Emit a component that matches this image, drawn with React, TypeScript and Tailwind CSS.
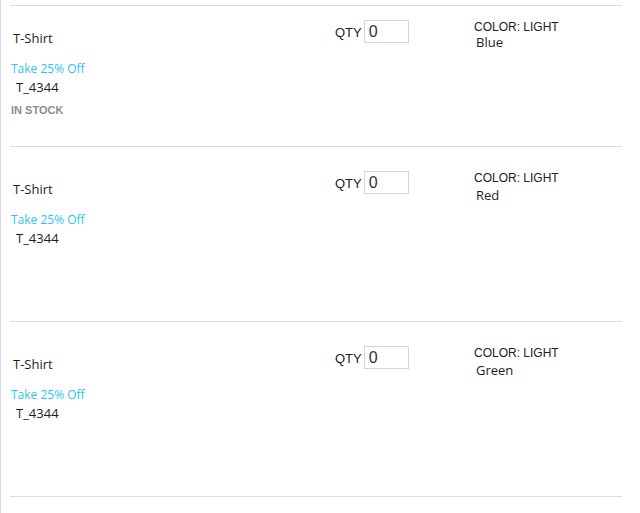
import { useState } from "react";

interface RowProps {
  name: string;
  color: string;
  sku: string;
  inStock?: boolean;
  first?: boolean;
}

function ProductRow({ name, color, sku, inStock, first }: RowProps) {
  const [qty, setQty] = useState("0");

  return (
    <div
      className={`border-t border-[#dcdcdc] flex items-start ${
        first ? "h-[141px]" : "h-[175px] pt-[10px]"
      }`}
    >
      {/* 상품 정보 */}
      <div className="w-[325px] flex flex-col pt-[24px] font-['Open_Sans',sans-serif]">
        <span className="pl-[3px] text-[13px] leading-4 text-[#1e1e1e]">{name}</span>
        <span className="pl-[1px] mt-[15px] text-[12px] leading-4 font-medium text-[#2fc3ef]">
          Take 25% Off
        </span>
        <span className="pl-[6px] mt-[2px] text-[13px] leading-4 text-[#1e1e1e]">{sku}</span>
        {inStock && (
          <span className="pl-[1px] mt-[7px] text-[11px] leading-4 font-bold text-[#8d8d8d] font-['Liberation_Sans',Arial,sans-serif]">
            IN STOCK
          </span>
        )}
      </div>

      {/* 수량 */}
      <div className="w-[139px] flex items-end gap-[2px] pt-[14px] font-['Liberation_Sans',Arial,sans-serif]">
        <span className="text-[13px] leading-[20px] text-[#222]">QTY</span>
        <input
          value={qty}
          onChange={(e) => setQty(e.target.value)}
          className="w-[45px] h-[23px] border border-[#d6d6d6] px-[4px] text-[16px] text-[#333] outline-none"
        />
      </div>

      {/* 색상 */}
      <div className="flex flex-col pt-[14px]">
        <span className="text-[12px] leading-[14px] text-[#222] font-['Liberation_Sans',Arial,sans-serif]">
          COLOR: LIGHT
        </span>
        <span
          className={`pl-[2px] text-[13px] leading-4 text-[#1e1e1e] font-['Open_Sans',sans-serif] ${
            first ? "" : "mt-[2px]"
          }`}
        >
          {color}
        </span>
      </div>
    </div>
  );
}

export default function App() {
  const items = [
    { color: "Blue", inStock: true },
    { color: "Red" },
    { color: "Green" },
  ];

  return (
    <div className="min-h-screen bg-white border-l border-[#cfd8e6] pt-[5px] pl-[9px]">
      <div className="w-[612px]">
        {items.map((item, i) => (
          <ProductRow
            key={item.color}
            name="T-Shirt"
            sku="T_4344"
            color={item.color}
            inStock={item.inStock}
            first={i === 0}
          />
        ))}
        <div className="border-t border-[#dcdcdc]" />
      </div>
    </div>
  );
}
